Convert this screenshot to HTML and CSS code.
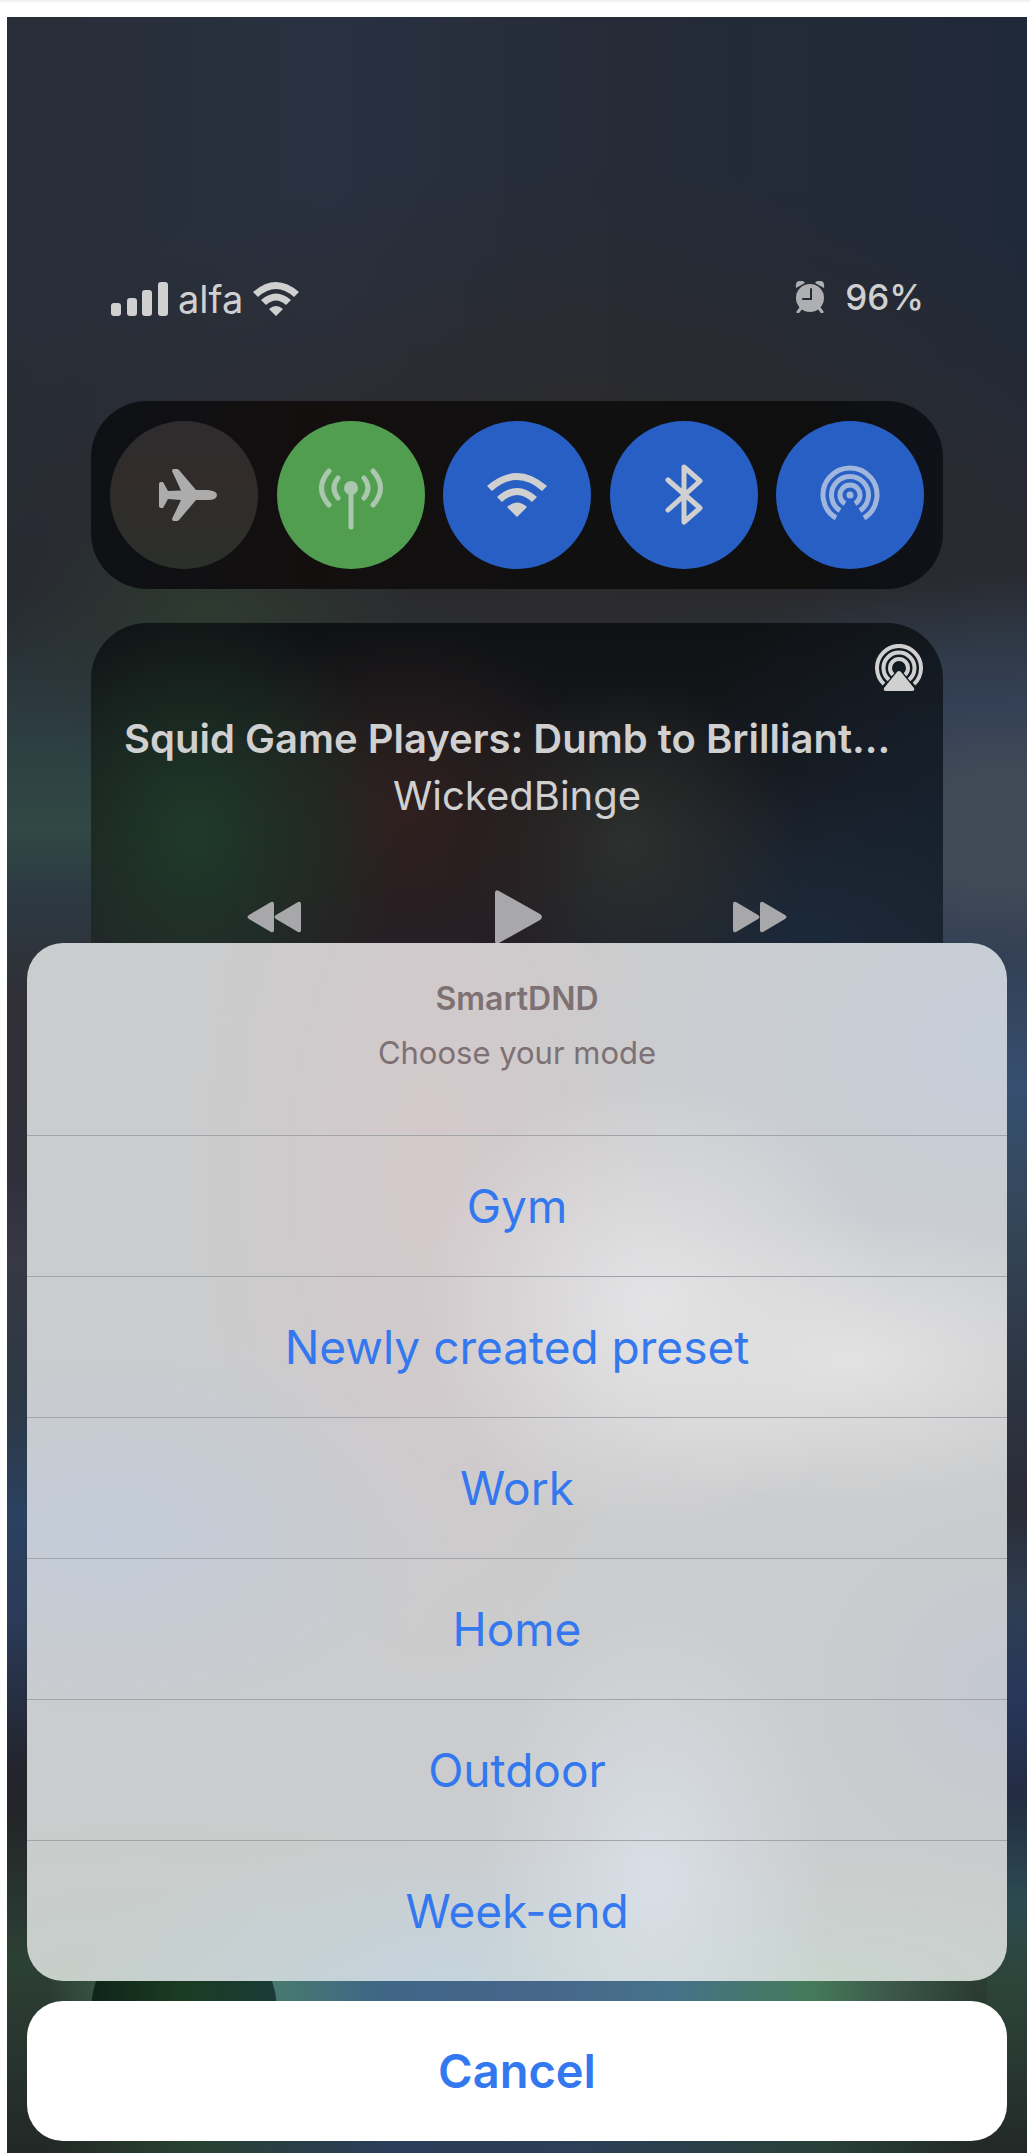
FILE: index.html
```html
<!DOCTYPE html>
<html lang="en">
<head>
<meta charset="utf-8">
<meta name="viewport" content="width=device-width, initial-scale=1">
<title>SmartDND</title>
<link rel="stylesheet" href="styles.css">
</head>
<body>
<main class="screen">
  <div class="control-center">
    <header class="status">
      <div class="status-group">
        <svg class="signal" viewBox="0 0 57 34" aria-hidden="true"><rect y="21" width="10" height="13" rx="3"/><rect x="16" y="16" width="10" height="18" rx="3"/><rect x="31" y="8" width="10" height="26" rx="3"/><rect x="47" width="10" height="34" rx="3"/></svg>
        <span class="carrier">alfa</span>
        <svg class="status-wifi" viewBox="0 0 46 34" aria-hidden="true"><path d="M0 10Q23-10 46 10L41 15Q23-1 5 15ZM8 18Q23 5 38 18L33 23Q23 14 13 23ZM16 27Q23 21 30 27L23 34Z"/></svg>
      </div>
      <div class="status-group status-right">
        <svg class="alarm" viewBox="0 0 30 32" aria-hidden="true"><circle cx="15" cy="17" r="14"/><path d="M1 7Q0 1 4 0Q8-1 10 2ZM29 7Q30 1 26 0Q22-1 20 2Z"/><path class="legs" d="M6 27L3 31M24 27L27 31"/><path class="hands" d="M16 8V18H8"/></svg>
        <span class="battery">96%</span>
      </div>
    </header>

    <section class="toggles" aria-label="Connectivity">
      <button class="toggle" aria-label="Airplane mode"><svg width="66" height="52" viewBox="-8 0 66 52"><path d="M0 15Q0 13 2 13H4L9 22L22 21.500L13 2Q13 0 15 0H18Q19 0 20 1L37 21H49Q58 22 58 26Q58 31 49 31H37L20 51Q19 52 18 52H15Q13 52 13 50L22 31L9 30L4 39H2Q0 39 0 37Z"/></svg></button>
      <button class="toggle toggle-green" aria-label="Cellular data"><svg width="66" height="70" viewBox="0 -8 66 70"><circle cx="33" cy="20" r="7"/><path class="line" d="M33 22V59M11 3Q-4 20 11 37M20 10Q12 20 20 30M55 3Q70 20 55 37M46 10Q54 20 46 30"/></svg></button>
      <button class="toggle toggle-blue bright" aria-label="Wi-Fi"><svg width="60" height="44" viewBox="0 0 60 44"><path d="M0 13Q30-13 60 13L55 18Q30-4 5 18ZM10 24Q30 6 50 24L45 29Q30 15 15 29ZM20 34Q30 25 40 34L30 44Z"/></svg></button>
      <button class="toggle toggle-blue bright" aria-label="Bluetooth"><svg width="38" height="62" viewBox="0 0 38 62"><path class="line" d="M3 16L35 44L19 58V3L35 17L3 46"/></svg></button>
      <button class="toggle toggle-blue soft" aria-label="AirDrop"><svg width="60" height="60" viewBox="0 0 60 60"><circle cx="30" cy="30" r="3.500"/><path class="arc" d="M25 38.700A10 10 0 1 1 35 38.700M20 45.600A18.500 18.500 0 1 1 40 45.600M16 53A27 27 0 1 1 44 53"/></svg></button>
    </section>

    <section class="media" aria-label="Now playing">
      <button class="airplay" aria-label="AirPlay"><svg width="48" height="47" viewBox="0 0 48 47"><path d="M24 27Q25 27 26 28L39 44Q40 47 37 47H11Q8 47 9 44L22 28Q23 27 24 27Z"/><path class="ring" d="M18 30.700A9 9 0 1 1 30 30.700M14 35.800A15.500 15.500 0 1 1 34 35.800M9 40A22 22 0 1 1 39 40"/></svg></button>
      <h1 class="track">Squid Game Players: Dumb to Brilliant...</h1>
      <p class="artist">WickedBinge</p>
      <div class="transport">
        <button aria-label="Rewind"><svg width="54" height="32" viewBox="0 0 54 32"><path d="M27 3V29Q27 32 24 31L2 18Q-1 16 2 14L24 1Q27 0 27 3ZM54 3V29Q54 32 51 31L29 18Q26 16 29 14L51 1Q54 0 54 3Z"/></svg></button>
        <button aria-label="Play"><svg width="52" height="54" viewBox="-4 0 52 54"><path d="M0 3Q0-1 4 1L45 24Q49 27 45 30L4 53Q0 55 0 51Z"/></svg></button>
        <button aria-label="Fast forward"><svg width="54" height="32" viewBox="0 0 54 32"><path d="M27 3V29Q27 32 24 31L2 18Q-1 16 2 14L24 1Q27 0 27 3ZM54 3V29Q54 32 51 31L29 18Q26 16 29 14L51 1Q54 0 54 3Z" transform="rotate(180 27 16)"/></svg></button>
      </div>
    </section>

    <button class="shortcut" aria-label="Shortcut"></button>
  </div>

  <div class="action-sheet" role="dialog" aria-labelledby="sheet-title">
    <div class="sheet">
      <div class="sheet-head">
        <h2 id="sheet-title">SmartDND</h2>
        <p>Choose your mode</p>
      </div>
      <button class="option">Gym</button>
      <button class="option">Newly created preset</button>
      <button class="option">Work</button>
      <button class="option">Home</button>
      <button class="option">Outdoor</button>
      <button class="option">Week-end</button>
    </div>
    <button class="cancel">Cancel</button>
  </div>
</main>
</body>
</html>
```

FILE: styles.css
```css
* { box-sizing: border-box; }

body {
  margin: 0;
  padding: 15px 3px 0 7px;
  border-top: 2px solid #f2f2f3;
  background: #fff;
  font-family: Inter, "Liberation Sans", sans-serif;
}

button {
  margin: 0;
  padding: 0;
  border: 0;
  background: none;
  font: inherit;
  color: inherit;
}

svg { display: block; fill: currentColor; }

h1, h2, p { margin: 0; }

/* Blurred wallpaper: glow behind the sheet gap, edge tints, then the vertical base */
.screen {
  position: relative;
  min-height: calc(100vh - 17px);
  background:
    linear-gradient(90deg, #3a574600 4%, #3a5746 10%, #477870 27%, #3f6587 37%, #46668a 52%, #46728a 65%, #457a58 79%, #3e5a4c 86%, #28342f00 95%) 0 calc(100% - 60px) / 100% 140px no-repeat,
    linear-gradient(90deg, #28402f00 4%, #28402f 17%, #2b3d5a 38%, #2b3f58 55%, #284038 80%, #28402f00 96%) 0 100% / 100% 60px no-repeat,
    linear-gradient(#334055, #364f70 11%, #34475a 21%, #2d3543 35%, #2a2c36 46%, #2f3d52 54%, #28365a 62%, #222c42 70%, #2c4a50 79%, #2d4438 86%, #26332f 95%, #232826) 100% 100% / 40px 56% no-repeat,
    radial-gradient(ellipse 50% 12% at 100% 38%, #414b57 20%, #334055 50%, #33405500 100%),
    radial-gradient(ellipse 20% 6% at 20% 28%, #2e3a30, #2e3a3000 100%),
    radial-gradient(ellipse 70% 16% at 55% 23%, #2d2b2b, #2a2a2c00 100%),
    linear-gradient(#262a3300 60%, #262a33) 0 0 / 100% 27% no-repeat,
    linear-gradient(90deg, #272e37 0, #293040 32%, #252b37 60%, #202939 100%) 0 0 / 100% 27% no-repeat,
    linear-gradient(#262a33 0 27%, #2d3f42 34%, #314844 38%, #2c3a42 41%, #302f36 46%, #2f2f3a 54%, #373844 58%, #2c3845 65%, #2b4160 70%, #2a3a58 75%, #23242d 82%, #232427 84%, #2c4035 91%, #26302b 97%, #222826 100%);
}

.control-center {
  display: flex;
  flex-direction: column;
  min-height: calc(100vh - 17px);
  padding: 262px 84px 49px;
}

.status {
  display: flex;
  justify-content: space-between;
  align-items: flex-start;
  height: 40px;
  margin-bottom: 82px;
  padding: 0 19px 0 20px;
  color: #d0d0d0;
}

.status-group { display: flex; align-items: center; gap: 10px; height: 40px; }
.status-right { gap: 20px; height: 36px; }
.signal { width: 57px; height: 34px; }
.status-wifi { width: 46px; height: 34px; }
.carrier { font-size: 38px; line-height: 40px; }
.battery { font-size: 35px; line-height: 36px; font-weight: 500; }
.alarm { width: 30px; height: 32px; color: #aeafb3; }
.legs, .hands { fill: none; stroke: currentColor; stroke-width: 3; stroke-linecap: round; }
.hands { stroke: #262a33; stroke-width: 2; }

.toggles {
  display: flex;
  justify-content: space-between;
  padding: 20px 19px;
  border-radius: 56px;
  background: linear-gradient(90deg, #0e1115, #140f0f 25%, #101011 60%, #0f0f10 85%, #0e1219);
}

.toggle {
  display: grid;
  place-items: center;
  width: 148px;
  height: 148px;
  border-radius: 50%;
  background: linear-gradient(#2e2c2e, #312c2b 40%, #2c2f2a);
  color: #acacac;
}
.toggle-green { background: #519e51; color: #aac8ae; }
.toggle-blue { background: #285fc5; }
.bright { color: #d0d0d0; }
.soft { color: #a0b6dc; }
.line { fill: none; stroke: currentColor; stroke-width: 5; stroke-linecap: round; stroke-linejoin: round; }
.arc { fill: none; stroke: currentColor; stroke-width: 5; }
.ring { fill: none; stroke: currentColor; stroke-width: 4; }

.media {
  display: flex;
  flex-direction: column;
  align-items: center;
  height: 480px;
  margin-top: 34px;
  padding: 21px 20px 0;
  border-radius: 56px;
  background:
    radial-gradient(ellipse 24% 50% at 12% 44%, #1f3a29, #1f3a2900 100%),
    radial-gradient(ellipse 24% 40% at 37% 40%, #30201f, #2c1a1e00 100%),
    radial-gradient(ellipse 20% 34% at 63% 46%, #2d302d, #2d302d00 100%),
    radial-gradient(ellipse 34% 34% at 84% 66%, #1b2939, #1b293900 100%),
    radial-gradient(ellipse 30% 60% at 100% 40%, #16202c, #16202c00 100%),
    linear-gradient(#0f1113, #16181c 30%, #221f27 66%);
  color: #d0d0d0;
}

.airplay { align-self: flex-end; }
.track {
  align-self: flex-start;
  margin: 20px 0 0 13px;
  font-size: 40px;
  line-height: 56px;
  font-weight: 600;
  white-space: nowrap;
}
.artist { font-size: 40px; line-height: 58px; }

.transport {
  display: flex;
  justify-content: space-between;
  align-items: center;
  align-self: stretch;
  margin-top: 65px;
  padding: 0 136px;
  color: #a8a8aa;
}

.shortcut {
  width: 186px;
  height: 186px;
  margin-top: auto;
  border-radius: 50%;
  background: linear-gradient(90deg, #10241a, #1b3c22 50%, #1a3b38);
}

.action-sheet {
  position: absolute;
  right: 20px;
  bottom: 12px;
  left: 20px;
  display: flex;
  flex-direction: column;
  gap: 20px;
  color: #3478f0;
}

.sheet {
  overflow: hidden;
  border-radius: 36px;
  background:
    radial-gradient(ellipse 30% 14% at 84% 40%, #e2e2e3, #e2e2e300 100%),
    radial-gradient(ellipse 24% 22% at 64% 35%, #e4e3e5, #e4e3e500 100%),
    radial-gradient(ellipse 18% 26% at 64% 90%, #d8dfe6, #d8dfe600 100%),
    radial-gradient(ellipse 40% 12% at 80% 100%, #c9d5cf, #c9d5cf00 100%),
    radial-gradient(ellipse 40% 14% at 45% 100%, #c5d4de, #c5d4de00 100%),
    radial-gradient(ellipse 50% 16% at 12% 100%, #c6cfca, #c6cfca00 100%),
    radial-gradient(ellipse 36% 20% at 8% 57%, #c3ccd8, #c3ccd800 100%),
    radial-gradient(ellipse 20% 18% at 100% 72%, #c4c8d2, #c4c8d200 100%),
    radial-gradient(ellipse 44% 30% at 100% 10%, #c6ced9, #c6ced900 100%),
    radial-gradient(ellipse 24% 50% at 41% 22%, #d4c9cb, #d4c9cb00 100%),
    #cbcccd;
}

.sheet-head {
  height: 192px;
  padding: 36px 20px 0;
  color: #7d7173;
  text-align: center;
}
.sheet-head h2 { font-size: 32px; line-height: 40px; font-weight: 600; }
.sheet-head p { margin-top: 14px; font-size: 31px; line-height: 40px; }

.option {
  display: block;
  width: 100%;
  height: 141px;
  border-top: 1px solid #a3a4a9;
  font-size: 46px;
  line-height: 56px;
}

.cancel {
  height: 140px;
  border-radius: 36px;
  background: #fff;
  font-size: 47px;
  line-height: 56px;
  font-weight: 600;
}
```
